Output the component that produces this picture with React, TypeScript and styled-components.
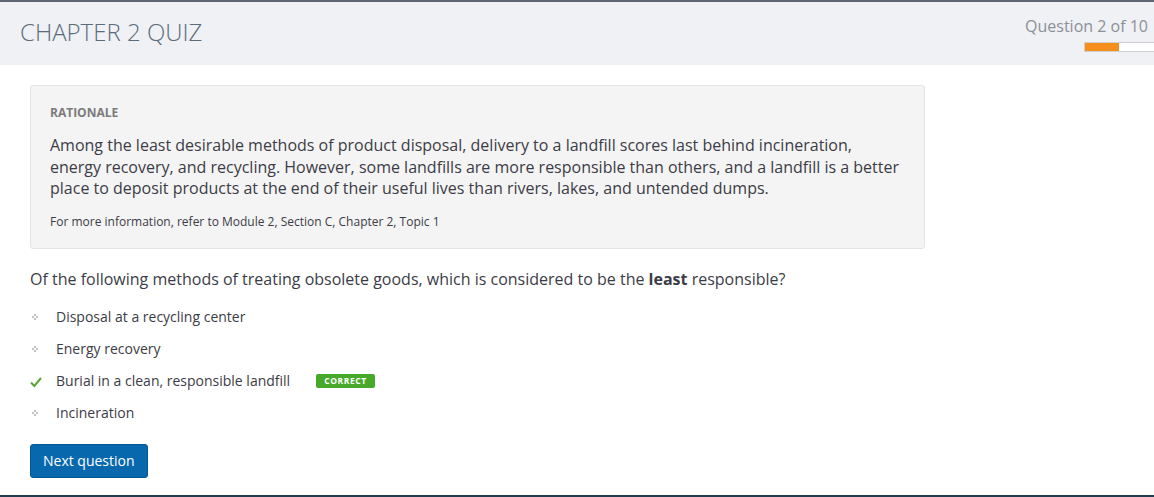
import styled, { createGlobalStyle } from 'styled-components';

const GlobalStyle = createGlobalStyle`
    html, body {
        margin: 0;
        padding: 0;
        background: #ffffff;
    }
    body {
        font-family: "Open Sans", "Liberation Sans", sans-serif;
        color: #3c3c46;
    }
`

const Page = styled.div`
    height: 497px;
    box-sizing: border-box;
    border-top: 2px solid #5d6570;
    border-bottom: 2px solid #213b4f;
    overflow: hidden;
`
const Header = styled.div`
    height: 63px;
    background-color: #eff1f5;
    display: flex;
    justify-content: space-between;
    align-items: flex-start;
    overflow: hidden;
`
const Title = styled.h1`
    margin: 13px 0 0 20px;
    font-size: 24px;
    font-weight: 300;
    color: #5c6b7a;
`
const Progress = styled.div`
    display: flex;
    flex-direction: column;
    align-items: flex-end;
    padding-top: 13px;
`
const Counter = styled.div`
    font-size: 16px;
    color: #8c9096;
    margin-right: 6px;
    line-height: 22px;
`
const Track = styled.div`
    margin-top: 5px;
    margin-right: -102px;
    width: 170px;
    height: 8px;
    background: #ffffff;
    border: 1px solid #cfd0d0;
`
const Fill = styled.div`
    height: 100%;
    background: #f68e1e;
`
const Content = styled.div`
    padding: 20px 30px 0 30px;
`
const Rationale = styled.div`
    width: 895px;
    box-sizing: border-box;
    background: #f4f4f4;
    border: 1px solid #e3e3e3;
    border-radius: 3px;
    padding: 19px 20px 18px 19px;
`
const Label = styled.div`
    font-size: 12px;
    font-weight: 700;
    color: #7b7b7b;
    line-height: 16px;
`
const Explanation = styled.p`
    margin: 14px 0 0 0;
    font-size: 16px;
    line-height: 21.5px;
    color: #3c3c46;
`
const Reference = styled.p`
    margin: 14px 0 0 0;
    font-size: 12px;
    line-height: 16px;
    color: #3c3c46;
`
const Question = styled.p`
    margin: 18px 0 0 0;
    font-size: 16px;
    line-height: 24px;
    color: #3c3c46;
`
const Options = styled.ul`
    list-style: none;
    margin: 10px 0 0 0;
    padding: 0;
`
const Option = styled.li`
    display: flex;
    align-items: center;
    height: 32px;
    font-size: 14px;
    color: #3c3c46;
`
const Marker = styled.span`
    width: 26px;
    display: flex;
    align-items: center;
    justify-content: flex-start;
`
const Badge = styled.span`
    margin-left: 26px;
    background: #46a92b;
    color: #ffffff;
    font-size: 8.5px;
    font-weight: 700;
    letter-spacing: 0.6px;
    padding: 0 8px;
    height: 14px;
    line-height: 14px;
    border-radius: 2px;
`
const Button = styled.button`
    margin-top: 15px;
    height: 34px;
    padding: 0 12px;
    background-color: #0868ae;
    border: 1px solid #04598f;
    border-radius: 3px;
    color: #ffffff;
    font-family: "Open Sans", "Liberation Sans", sans-serif;
    font-size: 14px;
    cursor: pointer;
`

function Dot() {
    return (
        <svg width="10" height="10" viewBox="0 0 10 10">
            <g fill="#c4c4c4">
                <rect x="4" y="2" width="2" height="2" />
                <rect x="2" y="4" width="2" height="2" />
                <rect x="6" y="4" width="2" height="2" />
                <rect x="4" y="6" width="2" height="2" />
            </g>
        </svg>
    )
}

function Check() {
    return (
        <svg width="12" height="12" viewBox="0 0 12 12" style={{ marginTop: 2 }}>
            <path d="M1 6.5 L4.3 10 L11 2" fill="none" stroke="#5ca531" strokeWidth="2" />
        </svg>
    )
}

const options = [
    { text: 'Disposal at a recycling center', correct: false },
    { text: 'Energy recovery', correct: false },
    { text: 'Burial in a clean, responsible landfill', correct: true },
    { text: 'Incineration', correct: false },
]

export default function App() {
    const current = 2
    const total = 10

    return (
        <Page>
            <GlobalStyle />
            <Header>
                <Title>CHAPTER 2 QUIZ</Title>
                <Progress>
                    <Counter>Question {current} of {total}</Counter>
                    <Track>
                        <Fill style={{ width: `${(current / total) * 100}%` }} />
                    </Track>
                </Progress>
            </Header>
            <Content>
                <Rationale>
                    <Label>RATIONALE</Label>
                    <Explanation>
                        Among the least desirable methods of product disposal, delivery to a landfill scores last behind incineration,
                        energy recovery, and recycling. However, some landfills are more responsible than others, and a landfill is a better
                        place to deposit products at the end of their useful lives than rivers, lakes, and untended dumps.
                    </Explanation>
                    <Reference>For more information, refer to Module 2, Section C, Chapter 2, Topic 1</Reference>
                </Rationale>
                <Question>
                    Of the following methods of treating obsolete goods, which is considered to be the <b>least</b> responsible?
                </Question>
                <Options>
                    {options.map((o) => (
                        <Option key={o.text}>
                            <Marker>{o.correct ? <Check /> : <Dot />}</Marker>
                            {o.text}
                            {o.correct ? <Badge>CORRECT</Badge> : ''}
                        </Option>
                    ))}
                </Options>
                <Button>Next question</Button>
            </Content>
        </Page>
    );
}
